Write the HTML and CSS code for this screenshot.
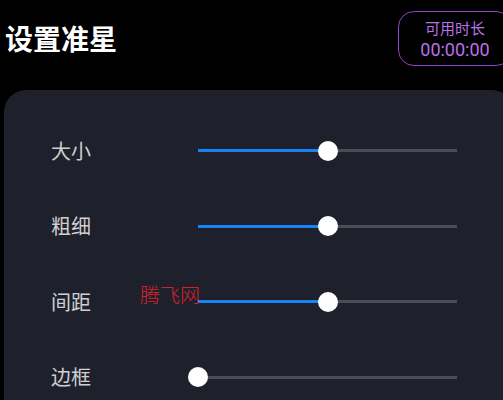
FILE: index.html
```html
<!DOCTYPE html>
<html lang="zh">
<head>
<meta charset="utf-8">
<link rel="stylesheet" href="styles.css">
</head>
<body>
<header class="header">
  <h1 class="title">设置准星</h1>
  <div class="timer">
    <div class="timer-label">可用时长</div>
    <div class="timer-value">00:00:00</div>
  </div>
</header>
<main class="card">
  <div class="row">
    <span class="label">大小</span>
    <div class="slider"><div class="fill" style="width:50%"></div><div class="thumb" style="left:50%"></div></div>
  </div>
  <div class="row">
    <span class="label">粗细</span>
    <div class="slider"><div class="fill" style="width:50%"></div><div class="thumb" style="left:50%"></div></div>
  </div>
  <div class="row">
    <span class="label">间距</span>
    <div class="slider"><div class="fill" style="width:50%"></div><div class="thumb" style="left:50%"></div></div>
    <span class="watermark">腾飞网</span>
  </div>
  <div class="row">
    <span class="label">边框</span>
    <div class="slider"><div class="fill" style="width:0%"></div><div class="thumb" style="left:0%"></div></div>
  </div>
</main>
</body>
</html>
```
FILE: styles.css
```css
html, body {
  margin: 0;
  padding: 0;
  background: #000;
  overflow: hidden;
  font-family: "Noto Sans CJK SC", "Noto Sans", sans-serif;
}
.header {
  box-sizing: border-box;
  display: flex;
  align-items: center;
  justify-content: space-between;
  padding: 11px 0 0 5px;
  margin-bottom: 24px;
  width: 520px;
}
.title {
  margin: 0;
  color: #fff;
  font-size: 28px;
  font-weight: 700;
  line-height: 55px;
}
.timer {
  box-sizing: border-box;
  width: 114px;
  height: 55px;
  margin-right: 8px;
  padding-top: 2px;
  border: 1px solid #8e44c8;
  border-radius: 16px;
  display: flex;
  flex-direction: column;
  align-items: center;
  justify-content: center;
  color: #b872e8;
}
.timer-label {
  font-size: 15px;
  line-height: 20px;
}
.timer-value {
  font-family: Roboto, "Noto Sans", sans-serif;
  font-size: 18px;
  line-height: 24px;
}
.card {
  box-sizing: border-box;
  margin-left: 4px;
  width: 510px;
  height: 310px;
  overflow: hidden;
  background: #1e212b;
  border-radius: 22px 22px 0 0;
  padding: 22.75px 0 0 47px;
}
.row {
  position: relative;
  display: grid;
  grid-template-columns: 147px 259px;
  align-items: center;
  height: 75.5px;
}
.label {
  color: #cfcfd2;
  font-size: 20px;
  line-height: 24px;
}
.slider {
  position: relative;
  height: 3px;
  background: #4a4c56;
}
.fill {
  height: 100%;
  background: #1684f6;
}
.thumb {
  position: absolute;
  top: 50%;
  width: 20px;
  height: 20px;
  border-radius: 50%;
  background: #fff;
  transform: translate(-50%, -50%);
}
.watermark {
  position: absolute;
  left: 89px;
  top: 19px;
  color: #d8202c;
  font-family: "Noto Sans CJK SC", sans-serif;
  font-weight: 300;
  font-size: 20px;
  line-height: 24px;
}
```
